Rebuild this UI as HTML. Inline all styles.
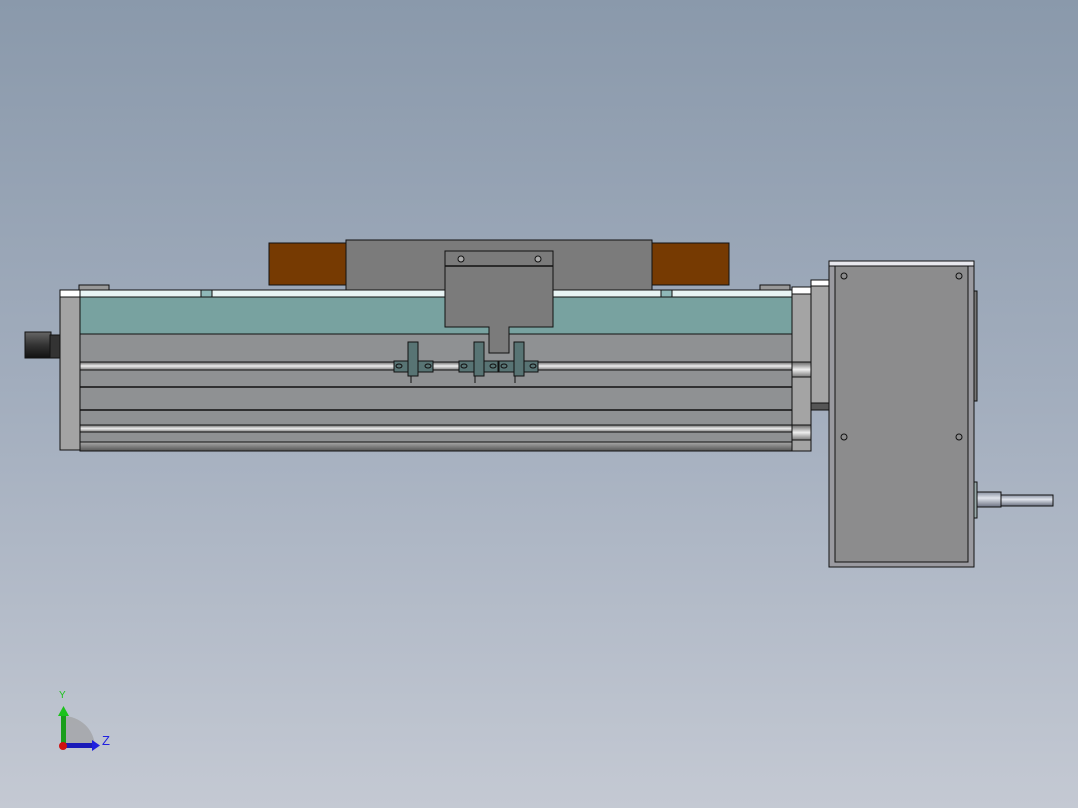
<!DOCTYPE html>
<html><head><style>html,body{margin:0;padding:0;width:1078px;height:808px;overflow:hidden}
body{background:linear-gradient(#8a99ab,#a3aebe 50%,#c4c9d3)}</style></head><body>
<svg width="1078" height="808" viewBox="0 0 1078 808" xmlns="http://www.w3.org/2000/svg" style="position:absolute;left:0;top:0">
<defs>
<linearGradient id="rod" x1="0" y1="0" x2="0" y2="1"><stop offset="0" stop-color="#666"/><stop offset=".5" stop-color="#eee"/><stop offset="1" stop-color="#777"/></linearGradient>
<linearGradient id="bot" x1="0" y1="0" x2="0" y2="1"><stop offset="0" stop-color="#aaa"/><stop offset="1" stop-color="#555"/></linearGradient>
<linearGradient id="conn" x1="0" y1="0" x2="0" y2="1"><stop offset="0" stop-color="#666"/><stop offset=".5" stop-color="#333"/><stop offset="1" stop-color="#111"/></linearGradient>
<linearGradient id="shaft" x1="0" y1="0" x2="0" y2="1"><stop offset="0" stop-color="#8890a0"/><stop offset=".4" stop-color="#e0e4ec"/><stop offset="1" stop-color="#6a7080"/></linearGradient>
</defs>
<g stroke="#111" stroke-width="1">
<!-- brown blocks -->
<rect x="269" y="243" width="77" height="42" fill="#763a02"/>
<rect x="652" y="243" width="77" height="42" fill="#763a02"/>
<!-- carriage -->
<rect x="346" y="240" width="306" height="50" fill="#7b7b7b"/>
<!-- small top tabs -->
<rect x="79" y="285" width="30" height="6" fill="#999"/>
<rect x="760" y="285" width="30" height="6" fill="#999"/>
<!-- connector -->
<rect x="25" y="332" width="26" height="26" fill="url(#conn)"/>
<rect x="50" y="335" width="10" height="23" fill="#333"/>
<!-- left endcap -->
<rect x="60" y="290" width="20" height="160" fill="#a4a4a4"/>
<rect x="60" y="290" width="20" height="7" fill="#fff"/>
<!-- body -->
<rect x="80" y="290" width="712" height="161" fill="#8f9193"/>
<rect x="80" y="290" width="712" height="7" fill="#e8f4f4"/>
<rect x="80" y="297" width="712" height="37" fill="#78a2a0"/>
<line x1="80" y1="334" x2="792" y2="334"/>
<rect x="80" y="362" width="712" height="8" fill="url(#rod)"/>
<line x1="80" y1="387" x2="792" y2="387" stroke-width="1.5"/>
<line x1="80" y1="410" x2="792" y2="410" stroke-width="1.5"/>
<rect x="80" y="425" width="712" height="7" fill="url(#rod)"/>
<rect x="80" y="442" width="712" height="9" fill="url(#bot)"/>
<rect x="201" y="290" width="11" height="7" fill="#8fb8b8"/>
<rect x="661" y="290" width="11" height="7" fill="#8fb8b8"/>
<!-- right endcap -->
<rect x="792" y="287" width="19" height="164" fill="#a4a4a4"/>
<rect x="792" y="287" width="19" height="7" fill="#fff"/>
<rect x="792" y="362" width="19" height="15" fill="url(#rod)"/>
<rect x="792" y="425" width="19" height="15" fill="url(#rod)"/>
<!-- flange -->
<rect x="811" y="280" width="18" height="130" fill="#a4a4a4"/>
<rect x="811" y="280" width="18" height="6" fill="#fff"/>
<rect x="811" y="403" width="18" height="7" fill="#555"/>
<!-- plate -->
<path d="M445 251 H553 V327 H509 V353 H489 V327 H445 Z" fill="#7b7b7b"/>
<line x1="445" y1="266" x2="553" y2="266" stroke-width="1.5"/>
<circle cx="461" cy="259" r="3" fill="#aaa"/><circle cx="538" cy="259" r="3" fill="#aaa"/>
<!-- sensors -->
<g fill="#587474">
<rect x="394" y="361" width="39" height="11"/><rect x="459" y="361" width="39" height="11"/><rect x="499" y="361" width="39" height="11"/>
<rect x="408" y="342" width="10" height="34"/><rect x="474" y="342" width="10" height="34"/><rect x="514" y="342" width="10" height="34"/>
</g>
<g fill="none"><ellipse cx="399" cy="366" rx="3" ry="2"/><ellipse cx="428" cy="366" rx="3" ry="2"/><ellipse cx="464" cy="366" rx="3" ry="2"/><ellipse cx="493" cy="366" rx="3" ry="2"/><ellipse cx="504" cy="366" rx="3" ry="2"/><ellipse cx="533" cy="366" rx="3" ry="2"/>
<path d="M411 376v7M475 376v7M515 376v7"/></g>
<!-- gearbox -->
<rect x="829" y="261" width="145" height="306" fill="#9a9aa0"/>
<rect x="835" y="266" width="133" height="296" fill="#8c8c8d"/>
<rect x="829" y="261" width="145" height="5" fill="#e8e8ee"/>
<rect x="974" y="291" width="3" height="110" fill="#777"/>
<g fill="none"><circle cx="844" cy="276" r="3"/><circle cx="959" cy="276" r="3"/><circle cx="844" cy="437" r="3"/><circle cx="959" cy="437" r="3"/></g>
<!-- shaft -->
<rect x="974" y="482" width="3" height="36" fill="#9aa"/>
<rect x="977" y="492" width="24" height="15" fill="url(#shaft)"/>
<rect x="1001" y="495" width="52" height="11" fill="url(#shaft)"/>
</g>
<!-- triad -->
<path d="M63 716 A32 32 0 0 1 95 746 H63 Z" fill="#999" opacity=".6"/>
<rect x="61" y="714" width="5" height="32" fill="#1a9e1a"/>
<path d="M58 716 L63.5 706 L69 716 Z" fill="#1cc21c"/>
<rect x="63" y="743" width="30" height="5" fill="#1a1ab8"/>
<path d="M92 740 L100 745.5 L92 751 Z" fill="#2020e0"/>
<circle cx="63" cy="746" r="4" fill="#d01010"/>
<text x="59" y="698" font-family="Liberation Sans,sans-serif" font-size="10" fill="#1cc21c">Y</text>
<text x="102" y="745" font-family="Liberation Sans,sans-serif" font-size="13" fill="#2020e0">Z</text>
</svg>
</body></html>
